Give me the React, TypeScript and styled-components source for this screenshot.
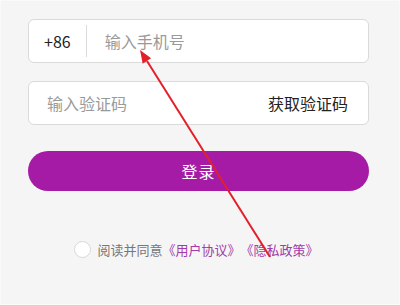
import React, { useState } from 'react';
import styled, { createGlobalStyle } from 'styled-components';

const GlobalStyle = createGlobalStyle`
  html, body {
    margin: 0;
    padding: 0;
    background: #f5f5f5;
  }
  body {
    font-family: "Noto Sans CJK SC", "Noto Sans", sans-serif;
  }
`;

const App: React.FC = () => {
  const [agreed, setAgreed] = useState(false);

  return (
    <Page>
      <GlobalStyle />
      <Field>
        <Prefix>+86</Prefix>
        <Divider />
        <Input placeholder="输入手机号" />
      </Field>
      <Field $gap={18}>
        <Input placeholder="输入验证码" $indent={18} />
        <CodeButton>获取验证码</CodeButton>
      </Field>
      <LoginButton>登录</LoginButton>
      <Agreement>
        <Radio $checked={agreed} onClick={() => setAgreed(!agreed)} />
        <Muted>阅读并同意</Muted>
        <Link>《用户协议》</Link>
        <Link>《隐私政策》</Link>
      </Agreement>
      {/* 标注箭头 */}
      <Overlay width="400" height="305" viewBox="0 0 400 305">
        <line x1="270" y1="257" x2="147" y2="61" stroke="#e3202a" strokeWidth="2" />
        <polygon points="140,50 151.1,58.3 142.7,63.7" fill="#e3202a" />
      </Overlay>
    </Page>
  );
};

const Page = styled.div`
  position: relative;
  box-sizing: border-box;
  width: 400px;
  height: 305px;
  padding: 18px 30px 0 27px;
  display: flex;
  flex-direction: column;
  background: #f5f5f5;
  border: 1px solid #fafafa;
`;

const Field = styled.div<{ $gap?: number }>`
  box-sizing: border-box;
  height: 44px;
  margin-top: ${p => p.$gap ?? 0}px;
  display: flex;
  align-items: center;
  background: #fff;
  border: 1px solid #dadada;
  border-radius: 6px;
`;

const Prefix = styled.span`
  padding: 0 15px 0 15px;
  font-size: 16px;
  color: #222;
`;

const Divider = styled.span`
  width: 1px;
  height: 32px;
  background: #dcdcdc;
`;

const Input = styled.input<{ $indent?: number }>`
  flex: 1;
  min-width: 0;
  border: none;
  outline: none;
  background: transparent;
  padding: 0 0 0 ${p => p.$indent ?? 18}px;
  font-family: inherit;
  font-size: 16px;
  color: #222;
  &::placeholder {
    color: #9a9a9a;
  }
`;

const CodeButton = styled.button`
  border: none;
  background: transparent;
  padding: 0 20px 0 0;
  font-family: inherit;
  font-size: 16px;
  color: #222;
`;

const LoginButton = styled.button`
  height: 40px;
  margin-top: 26px;
  border: none;
  border-radius: 20px;
  background: #a51ba5;
  color: #fff;
  font-family: inherit;
  font-size: 16px;
  letter-spacing: 1px;
`;

const Agreement = styled.div`
  margin-top: 49px;
  height: 18px;
  display: flex;
  align-items: center;
  justify-content: center;
  padding-right: 4px;
  font-size: 13px;
`;

const Radio = styled.span<{ $checked: boolean }>`
  box-sizing: border-box;
  width: 17px;
  height: 17px;
  margin-right: 6px;
  border-radius: 50%;
  border: 1px solid #d8d8d8;
  background: ${p => (p.$checked ? '#a51ba5' : '#fff')};
`;

const Muted = styled.span`
  color: #777;
`;

const Link = styled.span`
  color: #a23aa8;
`;

const Overlay = styled.svg`
  position: absolute;
  top: -1px;
  left: -1px;
  pointer-events: none;
`;

export default App;
